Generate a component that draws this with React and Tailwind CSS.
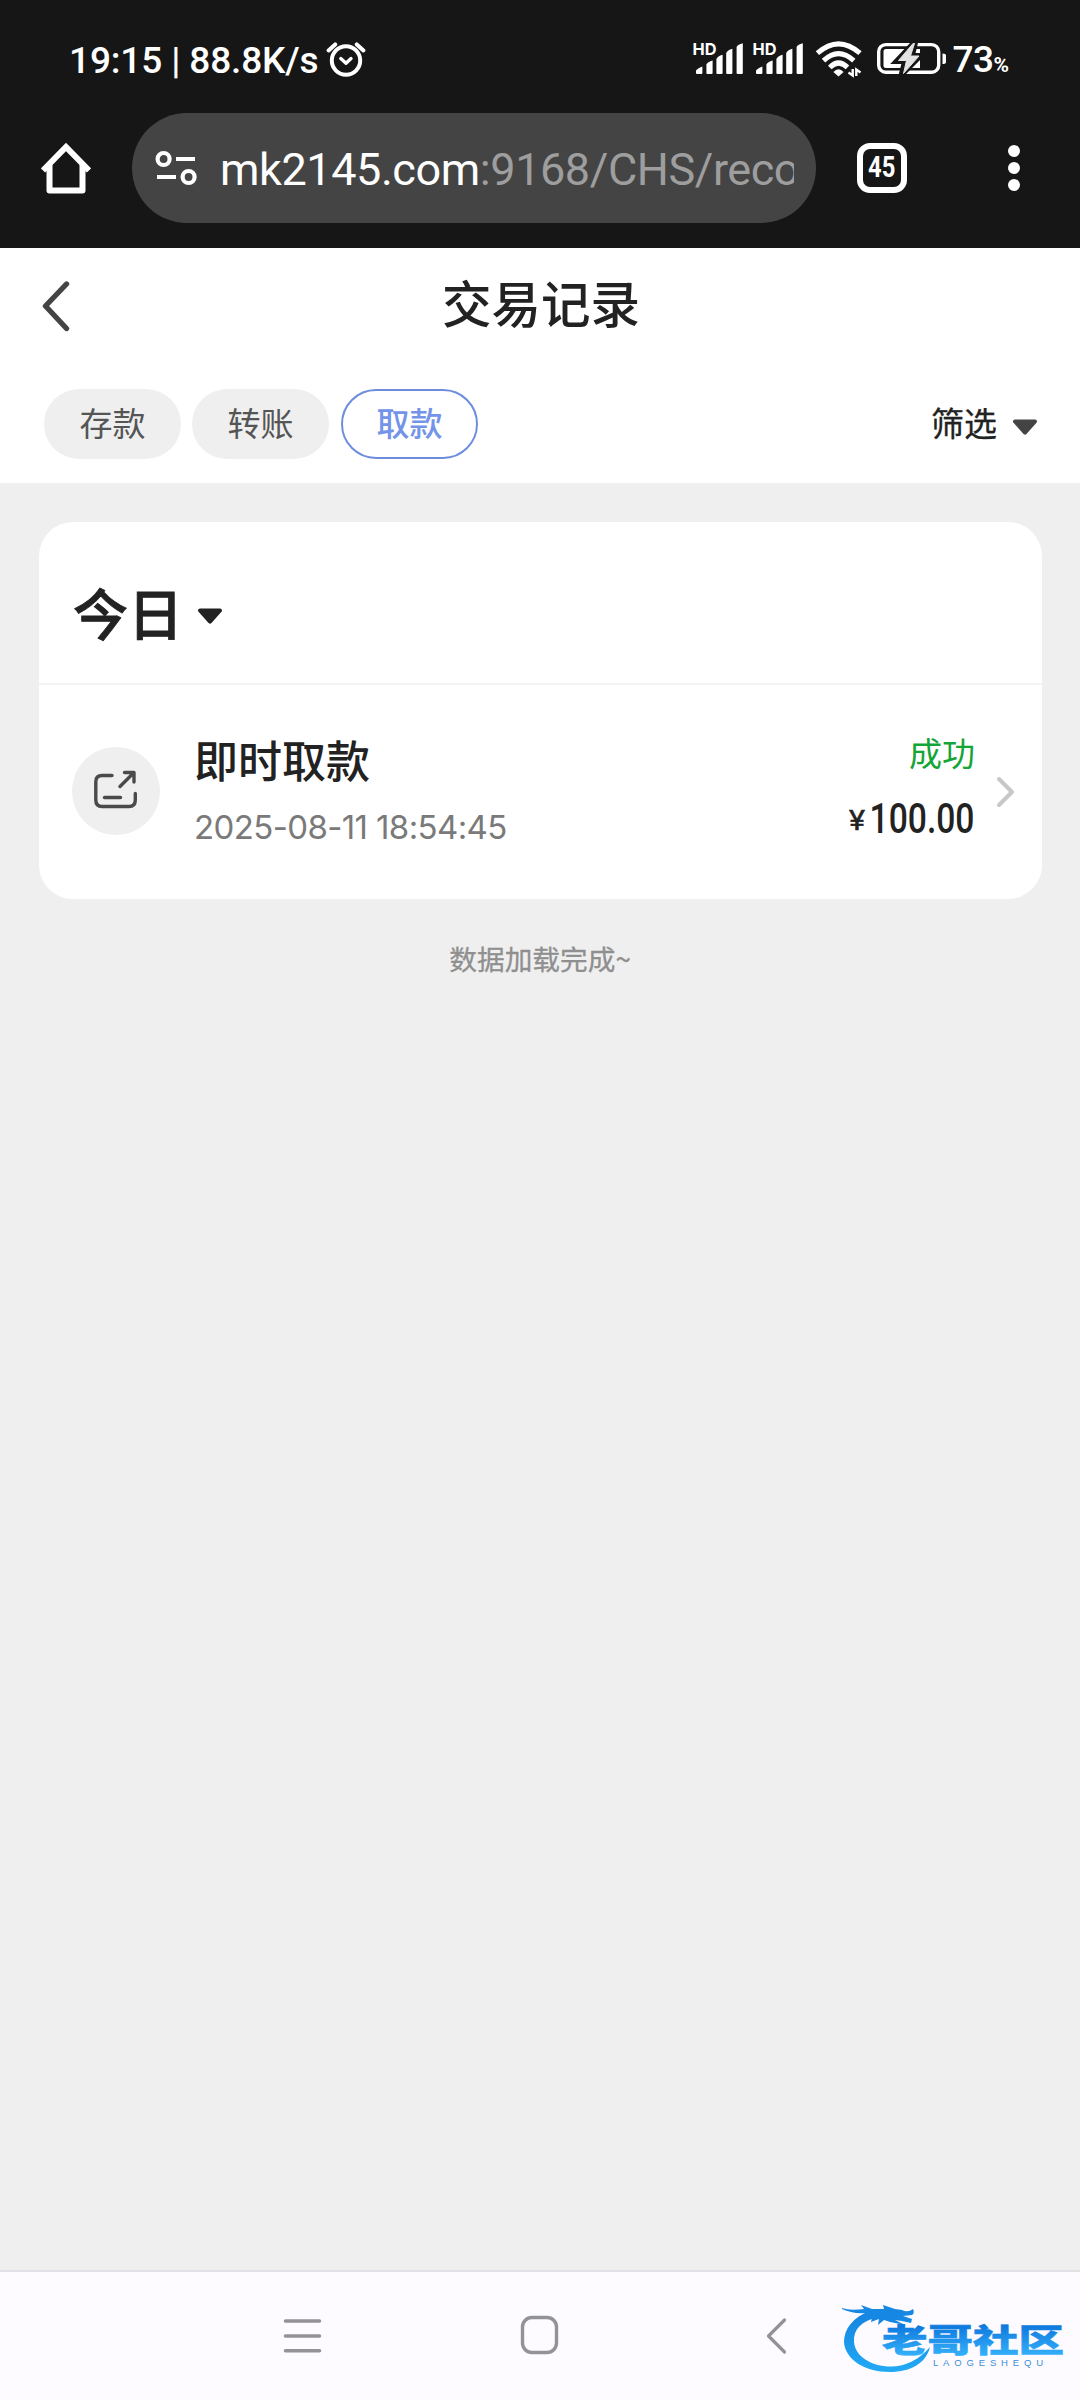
import React from "react";

const cjk = "font-['Noto_Sans_CJK_SC',sans-serif]";

function AlarmIcon() {
  return (
    <svg width="40" height="38" viewBox="0 0 40 38" fill="none" stroke="#fff" strokeLinecap="round" strokeLinejoin="round" className="-mt-[4px] ml-[8px]">
      <circle cx="20" cy="20.5" r="14.2" strokeWidth="4" />
      <path d="M14.8 18.6l5.2 4.6 5-4.6" strokeWidth="3.4" />
      <path d="M2.6 10.4l6.6-6M30.8 4.4l6.6 6" strokeWidth="4" />
    </svg>
  );
}

function Signal() {
  return (
    <svg width="52" height="34" viewBox="0 0 52 34" fill="#fff" className="-mt-[4px] overflow-visible">
      <text x="-0.5" y="12.500" fontFamily="Inter, sans-serif" fontWeight="700" fontSize="16.500" textLength="24" lengthAdjust="spacingAndGlyphs">HD</text>
      <path d="M3 29Q3 27.4 9.4 24.6V31Q9.4 32 8.4 32H4Q3 32 3 31z" />
      <path d="M13.4 22.4Q14.6 20 19.6 18.6V31Q19.6 32 18.6 32H14.4Q13.4 32 13.4 31z" />
      <path d="M23.400 17Q24.600 14.400 29.600 12.800V31Q29.600 32 28.600 32H24.400Q23.400 32 23.400 31z" />
      <path d="M33.200 11Q34.400 8.400 39.400 6.800V31Q39.400 32 38.400 32H34.200Q33.200 32 33.200 31z" />
      <path d="M43.600 5Q44.800 2.400 49.800 1.200V31Q49.800 32 48.800 32H44.600Q43.600 32 43.600 31z" />
    </svg>
  );
}

function WifiIcon() {
  return (
    <svg width="48" height="38" viewBox="0 0 48 38" fill="none" stroke="#fff" strokeWidth="5" className="-mt-[4px]">
      <path d="M2.400 13.200Q23.500 -5.500 45 13.200" />
      <path d="M8.500 20.600Q23.500 6.500 38.800 20.600" />
      <path d="M14.800 27.400Q23.500 18.600 32.500 27.400" />
      <path d="M18.400 32Q23.500 26.600 28.600 32L23.500 36.500z" fill="#fff" stroke="none" />
      <path d="M33.500 32.500l4.200 3V29M45.500 32.500l-4.200-3V36" strokeWidth="2.400" />
    </svg>
  );
}

function BatteryIcon() {
  return (
    <svg width="70" height="36" viewBox="0 0 70 36" fill="none" className="-mt-[4px] overflow-visible">
      <rect x="1.700" y="3.600" width="60" height="27.600" rx="7" stroke="#fff" strokeWidth="3.400" />
      <path d="M9 8h34v19H9q-2.500 0-2.500-2.500V10.500q0-2.500 2.500-2.500z" fill="#fff" />
      <path d="M65.500 12.500q3.500 0 3.500 2v6.500q0 2-3.500 2z" fill="#fff" />
      <path d="M37 1.500L19 20.500H27.500L24 34.500L44 14.500H35.500L38.500 1.500z" fill="#161616" stroke="#161616" strokeWidth="5" />
      <path d="M36 2.500L21.500 19.500H29.500L26.500 32.500L42 15H33.500L37.500 2.500z" fill="#e2e2e2" stroke="#e2e2e2" strokeWidth="1" />
    </svg>
  );
}

function StatusBar() {
  return (
    <div className="flex h-[106px] items-start justify-between pl-[69px] pr-[71px] pt-[40px] text-white">
      <div className="flex h-[42px] items-center">
        <span className="whitespace-nowrap font-[Roboto] text-[37px] font-medium leading-[42px] tracking-[-0.150px]">19:15 | 88.8K/s</span>
        <AlarmIcon />
      </div>
      <div className="flex h-[42px] items-center">
        <Signal />
        <div className="w-[8px]" />
        <Signal />
        <div className="w-[10px]" />
        <WifiIcon />
        <div className="w-[14px]" />
        <BatteryIcon />
        <span className="ml-[5px] mt-[2px] flex items-baseline font-[Roboto] font-medium leading-[42px]">
          <span className="text-[37px] tracking-[-0.500px]">73</span>
          <span className="text-[21px] font-bold">%</span>
        </span>
      </div>
    </div>
  );
}

function BrowserBar() {
  return (
    <div className="flex h-[142px] items-start pl-[41px] pt-[7px]">
      <svg width="50" height="52" viewBox="0 0 50 52" fill="none" stroke="#fff" strokeWidth="6" strokeLinejoin="round" className="mt-[29px]">
        <path d="M8.500 23V48.500H41.500V23" />
        <path d="M2 28.500L25 5L48 28.500" strokeLinejoin="miter" />
      </svg>
      <div className="ml-[41px] flex h-[110px] w-[684px] items-center rounded-full bg-[#444444] pl-[23px]">
        <svg width="44" height="36" viewBox="0 0 44 36" fill="none" stroke="#fff" strokeWidth="4.200">
          <circle cx="8.600" cy="9" r="6" />
          <path d="M21 9h19M2 27h19" />
          <circle cx="33.600" cy="27" r="6" />
        </svg>
        <div className="ml-[21px] mt-[3px] w-[574px] overflow-hidden whitespace-nowrap font-[Roboto] text-[45px] leading-[60px] tracking-[-0.420px] text-[#9e9e9e]">
          <span className="text-white">mk2145.com</span>:9168/CHS/reco
        </div>
      </div>
      <div className="ml-[41px] mt-[30px] flex h-[50px] w-[50px] items-center justify-center rounded-[13px] border-[6px] border-white font-[Roboto] text-[29px] font-bold text-white">
        <span className="scale-x-[0.82]">45</span>
      </div>
      <div className="ml-[101px] mt-[32px] flex flex-col gap-[5px]">
        <i className="size-[12px] rounded-full bg-white" />
        <i className="size-[12px] rounded-full bg-white" />
        <i className="size-[12px] rounded-full bg-white" />
      </div>
    </div>
  );
}

function Caret({ color, className }) {
  return (
    <svg width="26" height="17" viewBox="0 0 26 17" className={className}>
      <path d="M3 2.500H23L13 13.600z" fill={color} stroke={color} strokeWidth="4" strokeLinejoin="round" />
    </svg>
  );
}

function Header() {
  return (
    <header className="h-[235px] bg-white">
      <div className="flex h-[113px] items-center pl-[42px]">
        <svg width="28" height="52" viewBox="0 0 28 52" fill="none" stroke="#444" strokeWidth="5.400" strokeLinecap="round" strokeLinejoin="round" className="mt-[3px]">
          <path d="M24.500 4L3.500 26L24.500 48.500" />
        </svg>
        <h1 className="-mt-[6px] ml-[372px] text-[49.500px] font-medium leading-[60px] text-[#222]">交易记录</h1>
      </div>
      <div className="mt-[28px] flex h-[70px] items-center pl-[44px] pr-[42px] text-[33px]">
        <div className="flex h-[70px] w-[137px] items-center justify-center rounded-full bg-[#efefef] pb-[2px] text-[#555]">存款</div>
        <div className="ml-[11px] flex h-[70px] w-[137px] items-center justify-center rounded-full bg-[#efefef] pb-[2px] text-[#555]">转账</div>
        <div className="ml-[12px] flex h-[70px] w-[137px] items-center justify-center rounded-full border-2 border-[#6e8edd] bg-white pb-[2px] font-medium text-[#7394e8]">取款</div>
        <div className="ml-auto flex items-center text-[#222] [-webkit-text-stroke:0.300px_#222]">
          <span className="-mt-[2px]">筛选</span>
          <Caret color="#444" className="ml-[15px] mt-[6px]" />
        </div>
      </div>
    </header>
  );
}

function RecordCard() {
  return (
    <section className="ml-[39px] mt-[39px] h-[377px] w-[1003px] rounded-[34px] bg-white">
      <div className="flex h-[163px] items-center border-b-2 border-[#f3f3f3] pl-[34px] pt-[22px]">
        <h2 className="-mt-[6px] text-[55px] font-medium leading-[60px] text-[#222] [-webkit-text-stroke:0.800px_#222]">今日</h2>
        <Caret color="#222" className="ml-[14px] mt-[6px]" />
      </div>
      <div className="flex pl-[33px]">
        <div className="mt-[62px] flex size-[88px] items-center justify-center rounded-full bg-[#efefef]">
          <svg width="46" height="42" viewBox="0 0 46 42" fill="none" stroke="#4a4a4a" strokeWidth="3.400" strokeLinecap="round" strokeLinejoin="round" className="-ml-[2px] -mt-[3px]">
            <path d="M20 6.500H10Q3.800 6.500 3.800 12.700V31Q3.800 37.500 10 37.500H37Q43.300 37.500 43.300 31V24.500" />
            <path d="M12.500 28.500h16" />
            <path d="M28 17.500L41.500 4M32.500 3.500h9.500v9.500" />
          </svg>
        </div>
        <div className="ml-[34px] flex flex-col pt-[44px]">
          <span className="text-[44px] font-medium leading-[60px] text-[#222]">即时取款</span>
          <span className="mt-[18px] font-[Inter] text-[33px] leading-[40px] tracking-[-0.620px] text-[#7a7a7a]">2025-08-11 18:54:45</span>
        </div>
        <div className="ml-auto mr-[67px] flex flex-col items-end pt-[43px]">
          <span className="text-[33px] leading-[48px] text-[#14a536]">成功</span>
          <svg width="126" height="44" viewBox="0 0 126 44" fill="#222" fontFamily="Roboto, sans-serif" className="mt-[19px] overflow-visible">
            <text x="0" y="34.500" fontSize="28" textLength="16" lengthAdjust="spacingAndGlyphs" stroke="#222" strokeWidth="0.500">¥</text>
            <text x="20.500" y="38" fontWeight="500" fontSize="43" textLength="105" lengthAdjust="spacingAndGlyphs">100.00</text>
          </svg>
        </div>
        <svg width="20" height="34" viewBox="0 0 20 34" fill="none" stroke="#c8c8c8" strokeWidth="4" strokeLinecap="round" strokeLinejoin="round" className="-ml-[46px] mr-[26px] mt-[90px]">
          <path d="M3 4L16 17L3 30" />
        </svg>
      </div>
    </section>
  );
}

function CommunityLogo() {
  return (
    <svg width="226" height="80" viewBox="0 0 226 80">
      <defs>
        <linearGradient id="ring" x1="0" y1="0" x2="0" y2="1">
          <stop offset="0" stopColor="#1583de" />
          <stop offset="1" stopColor="#22aaf6" />
        </linearGradient>
        <linearGradient id="word" x1="0" y1="0" x2="0" y2="1">
          <stop offset="0.200" stopColor="#0d76dc" />
          <stop offset="0.900" stopColor="#35b2fb" />
        </linearGradient>
      </defs>
      <path d="M30 12C13 18 4 30 4 43C5 60 24 73 50 73C71 73 86 64 90 48C80 60 66 67.500 51 67.500C31 67.500 15 57 14 43C13 31 21 22 38 18z" fill="url(#ring)" />
      <path d="M2 9Q10 12 24 10L21 6L32 10L44 10L43 6L55 10L62 11Q68 14 73 10Q75 14 72 16L63 17L72 20L71 24L62 22L55 21L65 26L50 23L44 21L38 26L39 20L31 23L32 18L24 18L26 14Q12 15 2 10z" fill="#1688e3" />
      <text x="42" y="53" fontFamily="'Noto Sans CJK SC', sans-serif" fontWeight="900" fontSize="32" textLength="182" lengthAdjust="spacingAndGlyphs" fill="url(#word)" stroke="url(#word)" strokeWidth="0.600">老哥社区</text>
      <text x="93" y="66.500" fontFamily="'Liberation Sans', sans-serif" fontSize="9.500" textLength="110" fill="#3c8fd8">LAOGESHEQU</text>
    </svg>
  );
}

function NavBar() {
  return (
    <nav className="flex h-[130px] items-center border-t-2 border-[#e2e1e8] bg-[#fdfbff] pl-[283px]">
      <svg width="40" height="40" viewBox="0 0 40 40" stroke="#939295" strokeWidth="3.600" strokeLinecap="round" className="-mt-[1px]">
        <path d="M2.500 5h34M2.500 20h34M2.500 34.800h34" />
      </svg>
      <svg width="40" height="40" viewBox="0 0 40 40" fill="none" stroke="#939295" strokeWidth="3.400" className="-mt-[2px] ml-[196px]">
        <rect x="3.500" y="2.500" width="34" height="35" rx="9.500" />
      </svg>
      <svg width="24" height="40" viewBox="0 0 24 40" fill="none" stroke="#939295" strokeWidth="3.200" strokeLinecap="round" strokeLinejoin="round" className="-mt-[1px] ml-[206px]">
        <path d="M19.500 4L3.500 20L19.500 36" />
      </svg>
      <div className="ml-[51px] mt-[6px]">
        <CommunityLogo />
      </div>
    </nav>
  );
}

export default function App() {
  return (
    <div className={"flex h-[2400px] w-[1080px] flex-col overflow-hidden bg-[#efefef] " + cjk}>
      <div className="h-[248px] bg-[#161616]">
        <StatusBar />
        <BrowserBar />
      </div>
      <Header />
      <RecordCard />
      <p className="mt-[39px] text-center text-[27.700px] leading-[40px] text-[#8f8f8f] [-webkit-text-stroke:0.300px_#8f8f8f]">数据加载完成~</p>
      <div className="mt-auto">
        <NavBar />
      </div>
    </div>
  );
}
